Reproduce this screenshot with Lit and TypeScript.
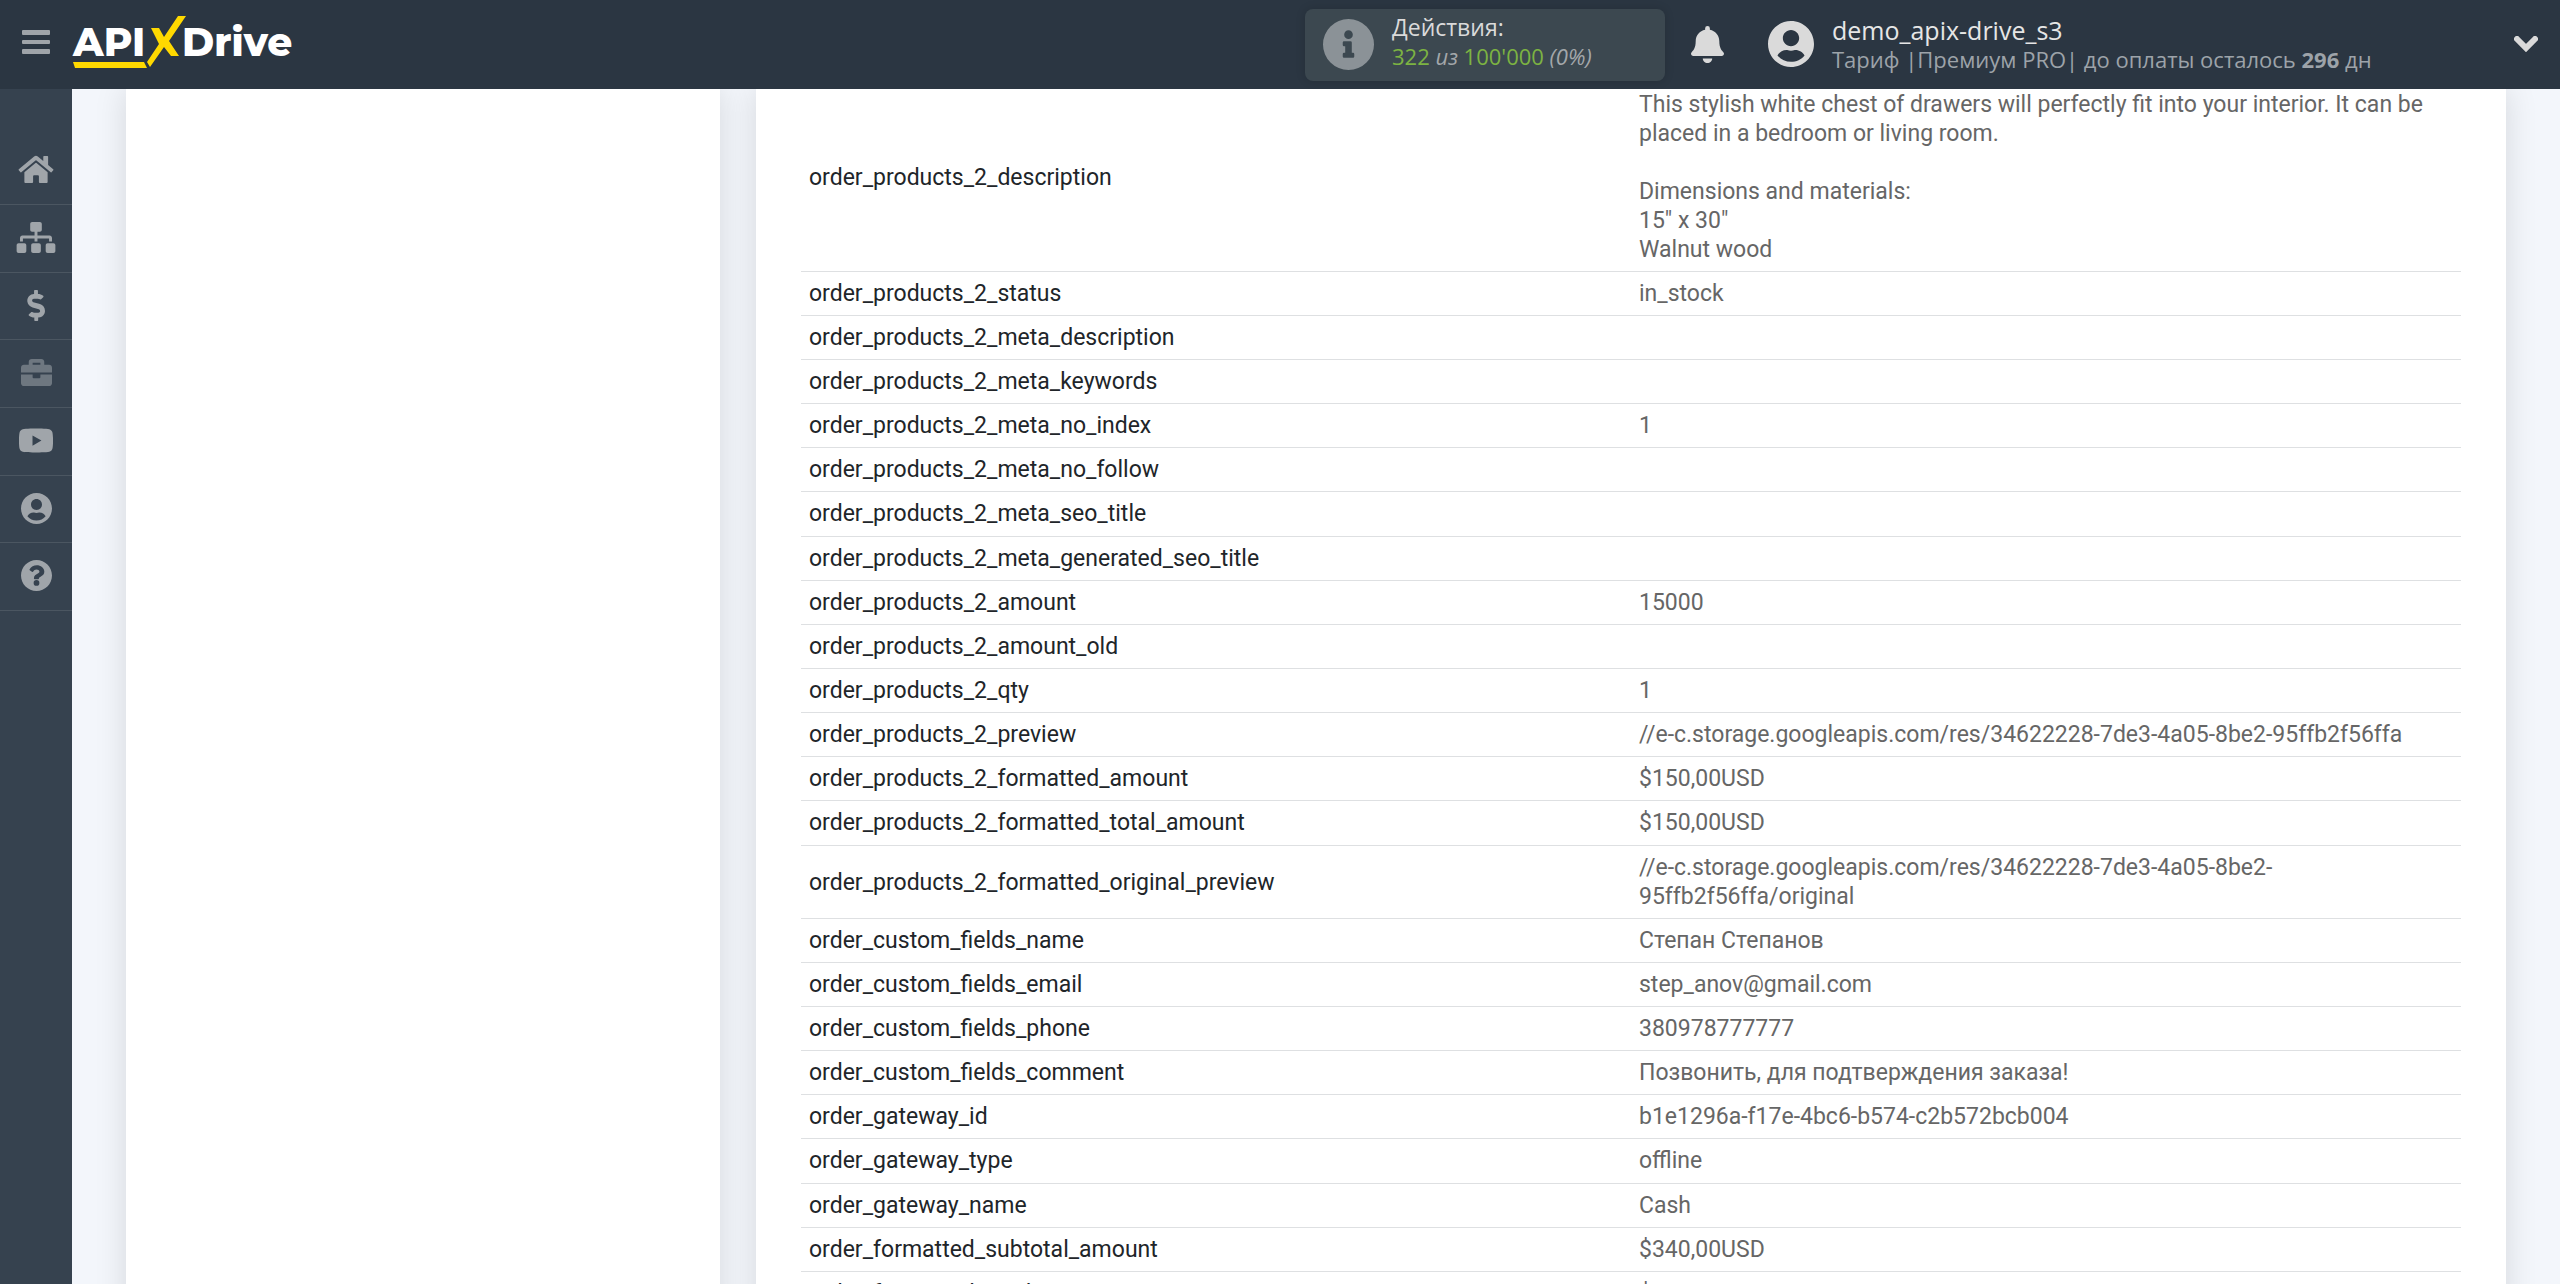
import { LitElement, html, css, svg } from "lit";
import { customElement } from "lit/decorators.js";

const DESCRIPTION = `This stylish white chest of drawers will perfectly fit into your interior. It can be placed in a bedroom or living room.

Dimensions and materials:
15" x 30"
Walnut wood`;

const FIELDS: [string, string][] = [
  ["order_products_2_description", DESCRIPTION],
  ["order_products_2_status", "in_stock"],
  ["order_products_2_meta_description", ""],
  ["order_products_2_meta_keywords", ""],
  ["order_products_2_meta_no_index", "1"],
  ["order_products_2_meta_no_follow", ""],
  ["order_products_2_meta_seo_title", ""],
  ["order_products_2_meta_generated_seo_title", ""],
  ["order_products_2_amount", "15000"],
  ["order_products_2_amount_old", ""],
  ["order_products_2_qty", "1"],
  ["order_products_2_preview", "//e-c.storage.googleapis.com/res/34622228-7de3-4a05-8be2-95ffb2f56ffa"],
  ["order_products_2_formatted_amount", "$150,00USD"],
  ["order_products_2_formatted_total_amount", "$150,00USD"],
  ["order_products_2_formatted_original_preview", "//e-c.storage.googleapis.com/res/34622228-7de3-4a05-8be2-95ffb2f56ffa/original"],
  ["order_custom_fields_name", "Степан Степанов"],
  ["order_custom_fields_email", "step_anov@gmail.com"],
  ["order_custom_fields_phone", "380978777777"],
  ["order_custom_fields_comment", "Позвонить, для подтверждения заказа!"],
  ["order_gateway_id", "b1e1296a-f17e-4bc6-b574-c2b572bcb004"],
  ["order_gateway_type", "offline"],
  ["order_gateway_name", "Cash"],
  ["order_formatted_subtotal_amount", "$340,00USD"],
  ["order_formatted_total_amount", "$340,00USD"],
];

const USER_PATH = "M248 8C111 8 0 119 0 256s111 248 248 248 248-111 248-248S385 8 248 8zm0 96c49 0 88 39 88 88s-39 88-88 88-88-39-88-88 39-88 88-88zm0 344c-59 0-111-27-146-69 19-35 56-59 98-59 2 0 5 0 7 1 13 4 27 7 41 7s28-3 41-7c2-1 5-1 7-1 42 0 79 24 98 59-35 42-87 69-146 69z";

const NAV = [
  { label: "Главная", box: "0 0 576 512", w: 36, path: "M280 148L96 300v164a16 16 0 0 0 16 16h112a16 16 0 0 0 16-16v-96a16 16 0 0 1 16-16h64a16 16 0 0 1 16 16v96a16 16 0 0 0 16 16h112a16 16 0 0 0 16-16V300L296 148a12 12 0 0 0-16 0zM572 251l-84-69V44a12 12 0 0 0-12-12h-56a12 12 0 0 0-12 12v72l-90-74a48 48 0 0 0-61 0L4 251a12 12 0 0 0-1 17l25 31a12 12 0 0 0 17 2L280 107a12 12 0 0 1 16 0l235 194a12 12 0 0 0 17-2l25-31a12 12 0 0 0-1-17z" },
  { label: "Связи", box: "0 0 640 512", w: 40, path: "M128 352H32c-18 0-32 14-32 32v96c0 18 14 32 32 32h96c18 0 32-14 32-32v-96c0-18-14-32-32-32zm-24-80h192v48h48v-48h192v48h48v-57c0-22-17-39-39-39H344v-64h40c18 0 32-14 32-32V32c0-18-14-32-32-32H256c-18 0-32 14-32 32v96c0 18 14 32 32 32h40v64H95c-22 0-39 17-39 39v57h48v-48zm264 80h-96c-18 0-32 14-32 32v96c0 18 14 32 32 32h96c18 0 32-14 32-32v-96c0-18-14-32-32-32zm240 0h-96c-18 0-32 14-32 32v96c0 18 14 32 32 32h96c18 0 32-14 32-32v-96c0-18-14-32-32-32z" },
  { label: "Оплата", box: "0 0 288 512", w: 18, path: "M209 233L101 202c-12-4-21-15-21-29 0-16 13-29 29-29h66c12 0 24 4 34 10 6 4 14 3 19-2l35-34c7-7 6-18-1-24-25-20-55-30-86-30V16c0-9-7-16-16-16h-32c-9 0-16 7-16 16v48h-2C46 64-6 121 1 188c5 47 41 86 87 99l102 30c13 4 22 16 22 29 0 16-13 29-29 29h-67c-12 0-24-4-34-10-6-4-14-3-19 2l-35 34c-7 7-6 18 1 24 25 20 55 30 87 30v41c0 9 7 16 16 16h32c9 0 16-7 16-16v-41c47-1 90-29 106-73 22-62-15-130-77-149z" },
  { label: "Кейсы", box: "0 0 512 512", w: 31, dim: true, path: "M320 336a16 16 0 0 1-16 16h-96a16 16 0 0 1-16-16v-48H0v144c0 26 22 48 48 48h416c26 0 48-22 48-48V288H320v48zM464 128h-80V80c0-26-22-48-48-48H176c-26 0-48 22-48 48v48H48c-26 0-48 22-48 48v80h512v-80c0-26-22-48-48-48zm-144 0H192V96h128v32z" },
  { label: "Видео", box: "16 56 544 400", w: 34, h: 25, path: "M550 124c-6-24-25-42-49-49C458 64 288 64 288 64S117 64 75 75c-24 7-43 25-49 49-11 43-11 132-11 132s0 90 11 133c6 23 25 41 49 48 42 11 213 11 213 11s170 0 213-11c24-7 43-25 49-48 11-43 11-133 11-133s0-89-11-132zM232 338V175l143 81-143 82z" },
  { label: "Профиль", box: "0 8 496 496", w: 31, path: USER_PATH },
  { label: "Помощь", box: "8 8 496 496", w: 31, path: "M504 256c0 137-111 248-248 248S8 393 8 256 119 8 256 8s248 111 248 248zM263 90c-55 0-90 23-117 64-4 5-3 13 2 17l35 26c6 4 13 3 17-2 18-23 30-36 57-36 21 0 46 13 46 33 0 15-12 23-33 34-24 13-55 30-55 72v4a12 12 0 0 0 12 12h56a12 12 0 0 0 12-12v-1c0-29 86-30 86-109 0-59-61-102-118-102zm-7 238a46 46 0 1 0 0 92 46 46 0 0 0 0-92z" },
];

@customElement("app-header")
export class AppHeader extends LitElement {
  static styles = css`
    :host { display: block; }
    .bar {
      display: flex; align-items: center; box-sizing: border-box; height: 89px;
      background: #2b3642; font-family: "Open Sans", sans-serif; position: relative; z-index: 1;
    }
    button { border: 0; padding: 0; background: none; display: flex; cursor: pointer; }
    svg { display: block; }
    .menu { width: 72px; height: 84px; align-items: center; justify-content: center; align-self: flex-start; }
    .logo { display: block; }
    .spacer { flex: 1; }
    .actions {
      display: flex; align-items: center; gap: 18px; box-sizing: border-box; width: 360px; height: 72px;
      padding: 0 18px; margin-right: 26px; border-radius: 8px; background: #3c4850; box-shadow: 0 0 10px #00000026;
    }
    .usage { padding-bottom: 7px; }
    .title { font-size: 23px; line-height: 30px; color: #dadada; }
    .count { font-size: 22px; line-height: 28px; color: #a3a7aa; }
    .num { color: #7cb342; }
    .bell { margin-right: 44px; }
    .account { display: flex; align-items: center; gap: 18px; width: 792px; padding-bottom: 2px; }
    .who { flex: 1; }
    .name { font-size: 25px; line-height: 30px; color: #e6e6e6; }
    .plan { font-size: 22px; line-height: 28px; color: #9da3a9; }
    .more { margin-right: 22px; }
  `;

  render() {
    return html`<header class="bar">
      <button class="menu" aria-label="Меню">
        <svg width="28" height="24" viewBox="0 0 28 24" fill="#9fa4a9"><rect width="28" height="5" rx="1"/><rect y="10" width="28" height="4" rx="1"/><rect y="19" width="28" height="5" rx="1"/></svg>
      </button>
      <a class="logo" href="#" aria-label="APIXDrive">
        <svg width="222" height="65" viewBox="72 12 222 65" font-family="Montserrat, Lato, sans-serif">
          <text x="73" y="56" font-size="39" font-weight="800" fill="#fff">API</text>
          <text x="182" y="56" font-size="39" font-weight="800" fill="#fff">Drive</text>
          <path d="M73 62h71l3 6H75z" fill="#ffd900"/>
          <path d="M178 16h8l-17 25 10 15h-8l-7-9-14 20-3-5 12-18-8-16h8l5 9z" fill="#ffd900"/>
        </svg>
      </a>
      <span class="spacer"></span>
      <div class="actions">
        <svg width="51" height="51" viewBox="8 8 496 496" fill="#8b9297"><path d="M256 8a248 248 0 1 0 0 496 248 248 0 0 0 0-496zm0 110a42 42 0 1 1 0 84 42 42 0 0 1 0-84zm56 254a12 12 0 0 1-12 12h-88a12 12 0 0 1-12-12v-24a12 12 0 0 1 12-12h12v-64h-12a12 12 0 0 1-12-12v-24a12 12 0 0 1 12-12h64a12 12 0 0 1 12 12v100h12a12 12 0 0 1 12 12v24z"/></svg>
        <div class="usage">
          <div class="title">Действия:</div>
          <div class="count"><span class="num">322</span> <i>из</i> <span class="num">100'000</span> <i>(0%)</i></div>
        </div>
      </div>
      <button class="bell" aria-label="Уведомления">
        <svg width="33" height="37" viewBox="0 0 448 512" preserveAspectRatio="none" fill="#dadada"><path d="M224 512c35 0 64-29 64-64H160c0 35 29 64 64 64zm215-150c-19-21-55-52-55-154 0-78-54-140-128-155V32a32 32 0 1 0-64 0v21C118 68 64 130 64 208c0 102-36 133-55 154-6 7-9 14-9 22 0 16 13 32 32 32h384c19 0 32-16 32-32 0-8-3-15-9-22z"/></svg>
      </button>
      <div class="account">
        <svg width="46" height="46" viewBox="0 8 496 496" fill="#dadada"><path d=${USER_PATH}/></svg>
        <div class="who">
          <div class="name">demo_apix-drive_s3</div>
          <div class="plan">Тариф |Премиум PRO| до оплаты осталось <b>296</b> дн</div>
        </div>
        <button class="more" aria-label="Открыть меню аккаунта">
          <svg width="24" height="16" viewBox="0 0 24 16" fill="none" stroke="#dadada" stroke-width="6" stroke-linecap="round"><path d="M3 3l9 9 9-9"/></svg>
        </button>
      </div>
    </header>`;
  }
}

@customElement("app-sidebar")
export class AppSidebar extends LitElement {
  static styles = css`
    :host { display: block; flex: none; width: 72px; background: #36424f; }
    nav { padding-top: 48px; }
    a {
      display: flex; align-items: center; justify-content: center; box-sizing: border-box;
      height: 68px; padding-bottom: 2px; border-bottom: 1px solid #4b5661; color: #a0a5aa;
    }
    a:nth-child(3n) { height: 67px; }
    .dim { color: #6e7780; }
    svg { display: block; }
  `;

  render() {
    return html`<nav>${NAV.map(
      (n) => html`<a href="#" class=${n.dim ? "dim" : ""} aria-label=${n.label}>
        <svg width=${n.w} height=${n.h ?? 31} viewBox=${n.box} fill="currentColor">${svg`<path d=${n.path}/>`}</svg>
      </a>`
    )}</nav>`;
  }
}

@customElement("field-table")
export class FieldTable extends LitElement {
  static styles = css`
    :host { display: block; }
    table {
      width: 100%; table-layout: fixed; border-collapse: separate; border-spacing: 0;
      font-family: Roboto, sans-serif; font-size: 23px; line-height: 29px;
    }
    th, td { padding: 7px 8px; border-bottom: 1px solid #dee0e2; text-align: left; vertical-align: middle; height: 29px; }
    tr:nth-child(7n) > * { padding-bottom: 8px; }
    th { font-weight: 400; color: #212529; }
    td { color: #666; white-space: pre-line; }
  `;

  render() {
    return html`<table><tbody>${FIELDS.map(
      ([key, value]) => html`<tr><th scope="row">${key}</th><td>${value}</td></tr>`
    )}</tbody></table>`;
  }
}

@customElement("app-root")
export class AppRoot extends LitElement {
  static styles = css`
    :host { display: flex; flex-direction: column; height: 100vh; overflow: hidden; background: #f3f6fb; }
    .body { flex: 1; min-height: 0; display: flex; }
    main {
      flex: 1; min-width: 0; overflow: hidden; box-sizing: border-box;
      display: grid; grid-template-columns: minmax(0, 594fr) minmax(0, 1750fr); gap: 36px; padding: 0 54px;
    }
    .card { background: #fff; box-shadow: 0 0 30px #00000020; }
    .data { padding: 0 45px; }
    .scrolled { margin-top: -6px; }
  `;

  render() {
    return html`
      <app-header></app-header>
      <div class="body">
        <app-sidebar></app-sidebar>
        <main>
          <section class="card steps"></section>
          <section class="card data"><field-table class="scrolled"></field-table></section>
        </main>
      </div>`;
  }
}
